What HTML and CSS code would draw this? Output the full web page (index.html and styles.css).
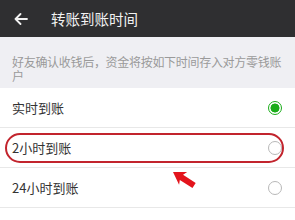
FILE: index.html
```html
<!DOCTYPE html>
<html lang="zh">
<head>
<meta charset="utf-8">
<link rel="stylesheet" href="styles.css">
</head>
<body>
<div class="page">
  <header class="bar">
    <svg class="back" width="14" height="12" viewBox="0 0 14 12"><path d="M13 6H1.5M6.5 1L1.5 6l5 5" fill="none" stroke="#f2f2f2" stroke-width="1.8" stroke-linecap="round" stroke-linejoin="round"/></svg>
    <span class="title">转账到账时间</span>
  </header>
  <div class="notice">好友确认收钱后，资金将按如下时间存入对方零钱账户</div>
  <ul class="list">
    <li class="row"><span>实时到账</span><span class="radio on"></span></li>
    <li class="row marked"><span>2小时到账</span><span class="radio"></span><span class="oval"></span></li>
    <li class="row"><span>24小时到账</span><span class="radio"></span></li>
  </ul>
  <svg class="pointer" width="32" height="26" viewBox="0 0 32 26"><g transform="translate(4,5) rotate(32.5)"><polygon points="0,0 12,-7.5 10,-3 25,-3 25,3 10,3 12,7.5" fill="#e3141c"/></g></svg>
</div>
</body>
</html>
```
FILE: styles.css
```css
* { box-sizing: border-box; }
body {
  margin: 0;
  background: #fff;
  font-family: "Noto Sans CJK SC", "Noto Sans", sans-serif;
}
.page { position: relative; width: 295px; height: 220px; overflow: hidden; }
.bar {
  height: 37px;
  background: #2f2f31;
  display: flex;
  align-items: center;
  padding-left: 14px;
}
.back { display: block; }
.title {
  margin-left: 23px;
  color: #f2f2f2;
  font-size: 14.5px;
  line-height: 20px;
}
.notice {
  background: #efeff3;
  color: #9a9a9a;
  font-size: 12px;
  letter-spacing: -0.3px;
  word-break: break-all;
  line-break: anywhere;
  line-height: 14px;
  padding: 18px 12px 5px 12px;
  height: 51px;
}
.list { list-style: none; margin: 0; padding: 0; }
.row {
  position: relative;
  height: 40px;
  border-bottom: 1px solid #e8e8e8;
  display: flex;
  align-items: center;
  justify-content: space-between;
  padding: 0 12px;
  color: #333;
  font-size: 13px;
}
.radio {
  width: 14px;
  height: 14px;
  border-radius: 50%;
  border: 1px solid #b8b8b8;
  margin-right: 1px;
}
.radio.on {
  border: 1.5px solid #1aad19;
  background: radial-gradient(circle, #1aad19 0 4.2px, #fff 4.8px);
}
.oval {
  position: absolute;
  left: 5px;
  top: 5px;
  width: 279px;
  height: 30px;
  border: 2px solid #c2242d;
  border-radius: 15px;
}
.pointer { position: absolute; left: 169px; top: 167px; }
```
